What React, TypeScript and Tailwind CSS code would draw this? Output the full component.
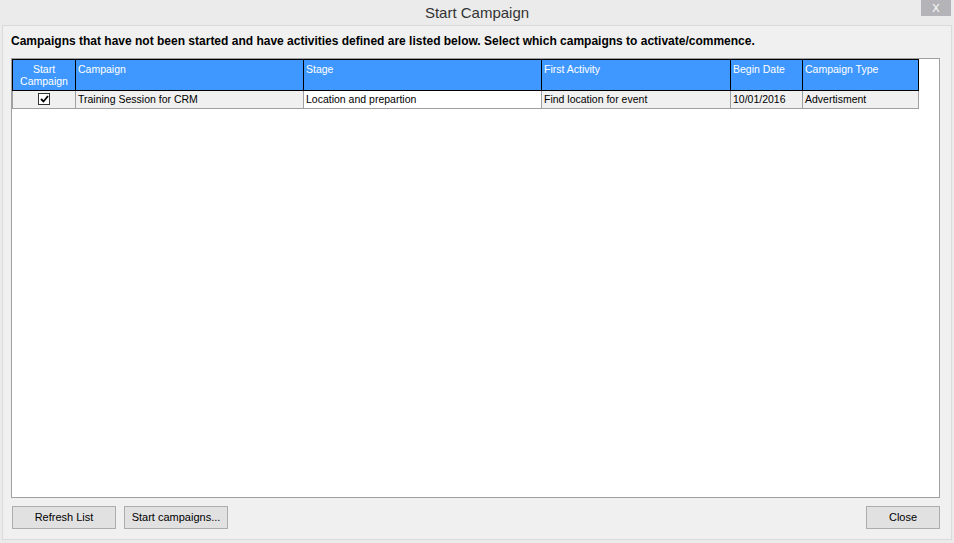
import React, { useState } from 'react';

const columns = [
  { key: 'start', label: 'Start Campaign', width: 'w-[63px]' },
  { key: 'campaign', label: 'Campaign', width: 'w-[228px]' },
  { key: 'stage', label: 'Stage', width: 'w-[238px]' },
  { key: 'activity', label: 'First Activity', width: 'w-[189px]' },
  { key: 'begin', label: 'Begin Date', width: 'w-[72px]' },
  { key: 'type', label: 'Campaign Type', width: 'w-[116px]' },
];

const rows = [
  {
    id: 1,
    campaign: 'Training Session for CRM',
    stage: 'Location and prepartion',
    activity: 'Find location for event',
    begin: '10/01/2016',
    type: 'Advertisment',
  },
];

const CheckBox: React.FC<{ checked: boolean; onChange: () => void }> = ({ checked, onChange }) => (
  <button
    onClick={onChange}
    className="w-[12px] h-[12px] border border-[#333] bg-white flex items-center justify-center"
  >
    {checked && (
      <svg width="9" height="8" viewBox="0 0 9 8">
        <path d="M1 4 L3.5 6.5 L8 1" stroke="#000" strokeWidth="1.8" fill="none" />
      </svg>
    )}
  </button>
);

const App: React.FC = () => {
  const [checked, setChecked] = useState<Record<number, boolean>>({ 1: true });

  return (
    <div className="w-[954px] h-[543px] bg-[#ebebeb] flex flex-col font-['Liberation_Sans',Arial,sans-serif] text-black overflow-hidden">
      {/* Title bar */}
      <div className="h-[25px] relative flex items-center justify-center">
        <span className="text-[15px] text-[#333] leading-none">Start Campaign</span>
        <div className="absolute right-[3px] top-0 w-[30px] h-[16px] bg-[#b4b4b8] flex items-center justify-center">
          <span className="text-white text-[11px] leading-none">X</span>
        </div>
      </div>

      {/* Panel */}
      <div className="ml-[2px] w-[950px] h-[515px] border border-[#dadada] bg-[#f0f0f0] flex flex-col pl-[8px] pr-[11px] pb-[10px]">
        <div className="h-[32px] flex items-center pb-[1px]">
          <p className="text-[12px] font-bold">
            Campaigns that have not been started and have activities defined are listed below. Select which campaigns to activate/commence.
          </p>
        </div>

        {/* Grid */}
        <div className="h-[441px] border border-[#a0a0a0] bg-white">
          <div className="flex border-t border-l border-b border-black bg-[#3f98ff] text-white text-[10.5px] w-[907px]">
            {columns.map((col) => (
              <div
                key={col.key}
                className={`${col.width} h-[30px] border-r border-black px-[2px] pt-[3px] leading-[12px] ${
                  col.key === 'start' ? 'text-center' : 'text-left'
                }`}
              >
                {col.key === 'start' ? (
                  <>
                    Start
                    <br />
                    Campaign
                  </>
                ) : (
                  col.label
                )}
              </div>
            ))}
          </div>
          {rows.map((row) => (
            <div key={row.id} className="flex border-l border-b border-[#a0a0a0] text-[10.5px] w-[907px]">
              <div className="w-[63px] h-[17px] border-r border-[#a0a0a0] bg-[#f0f0f0] flex items-center justify-center">
                <CheckBox
                  checked={!!checked[row.id]}
                  onChange={() => setChecked({ ...checked, [row.id]: !checked[row.id] })}
                />
              </div>
              <div className="w-[228px] h-[17px] border-r border-[#a0a0a0] bg-[#f0f0f0] px-[2px] flex items-center">
                {row.campaign}
              </div>
              <div className="w-[238px] h-[17px] border-r border-[#a0a0a0] bg-white px-[2px] flex items-center">
                {row.stage}
              </div>
              <div className="w-[189px] h-[17px] border-r border-[#a0a0a0] bg-[#f0f0f0] px-[2px] flex items-center">
                {row.activity}
              </div>
              <div className="w-[72px] h-[17px] border-r border-[#a0a0a0] bg-[#f0f0f0] px-[2px] flex items-center">
                {row.begin}
              </div>
              <div className="w-[116px] h-[17px] border-r border-[#a0a0a0] bg-[#f0f0f0] px-[2px] flex items-center">
                {row.type}
              </div>
            </div>
          ))}
        </div>

        {/* Buttons */}
        <div className="mt-[8px] flex items-center pl-[1px]">
          <button className="w-[104px] h-[23px] border border-[#adadad] bg-[#e1e1e1] text-[11px]">
            Refresh List
          </button>
          <button className="ml-[8px] w-[104px] h-[23px] border border-[#adadad] bg-[#e1e1e1] text-[11px]">
            Start campaigns...
          </button>
          <div className="flex-1" />
          <button className="w-[74px] h-[23px] border border-[#adadad] bg-[#e1e1e1] text-[11px]">
            Close
          </button>
        </div>
      </div>
    </div>
  );
};

export default App;
